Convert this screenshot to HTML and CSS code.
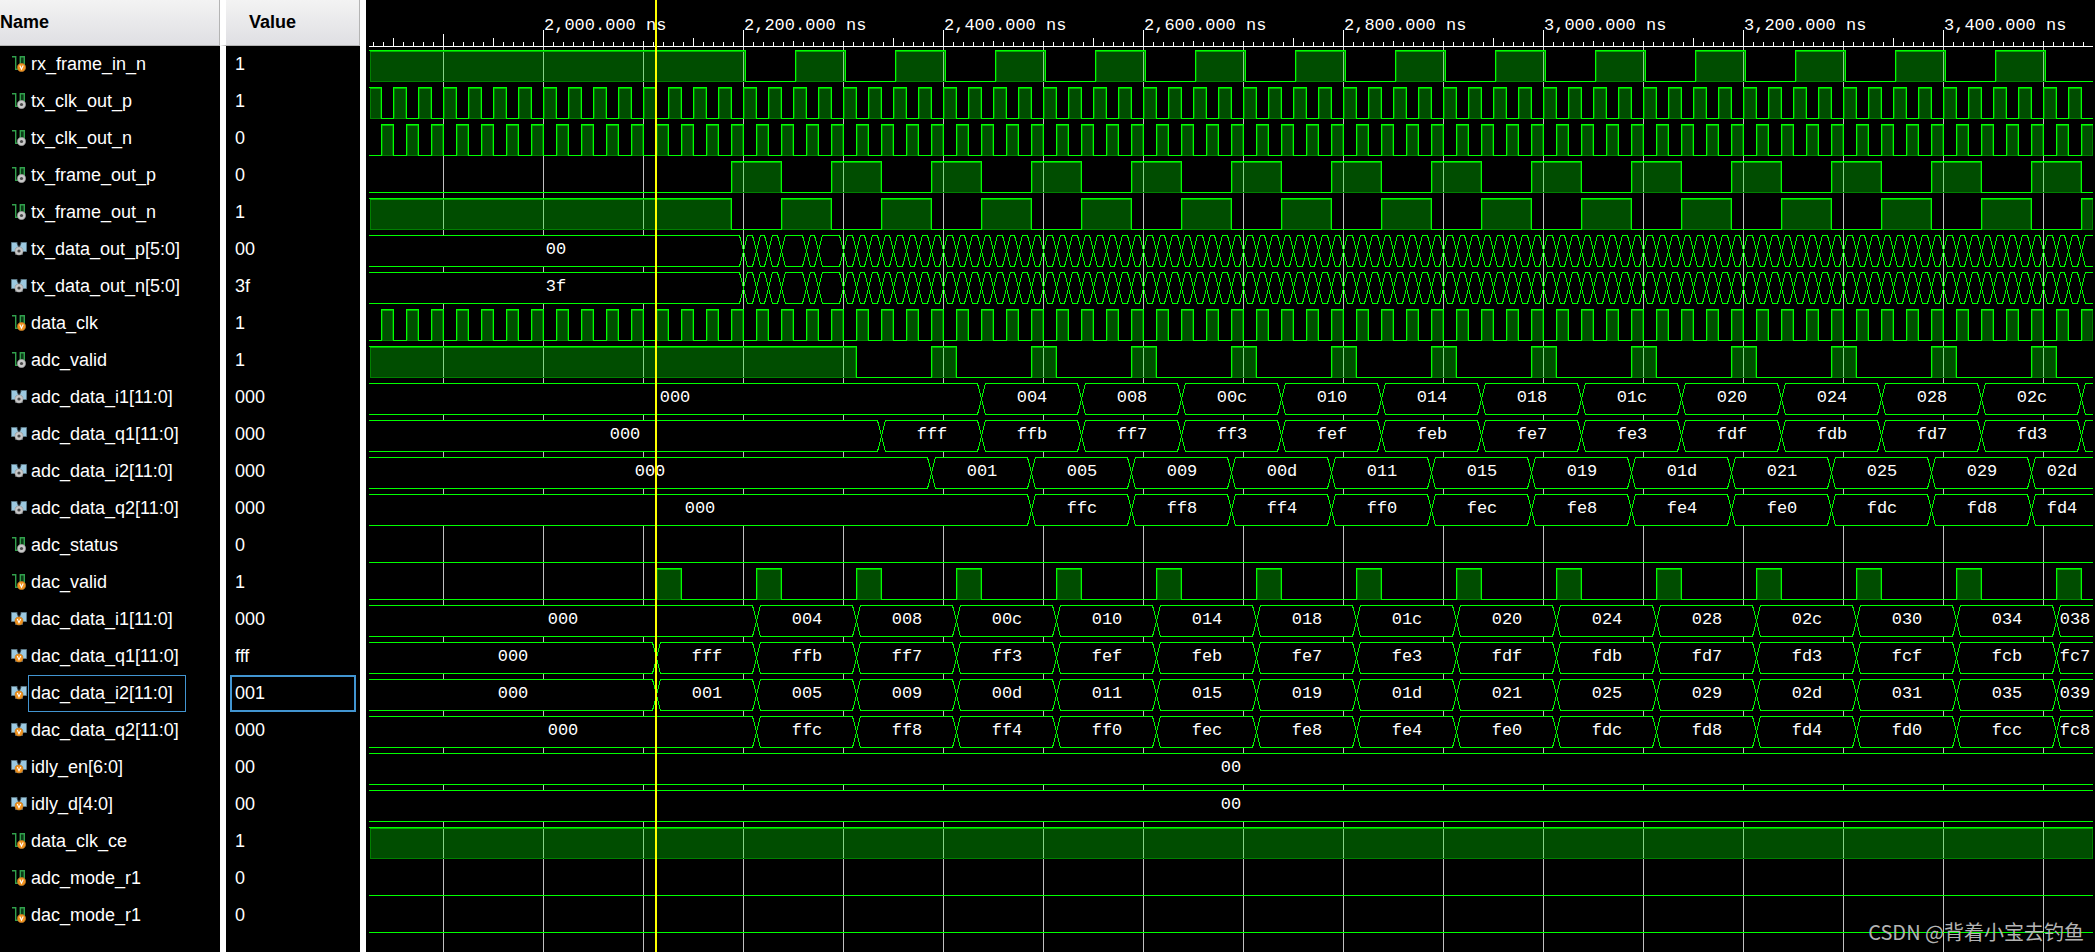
FILE: index.html
```html
<!DOCTYPE html>
<html lang="en">
<head>
  <meta charset="UTF-8">
  <meta name="viewport" content="width=device-width, initial-scale=1.0">
  <title>Waveform</title>
  <link rel="stylesheet" href="styles.css">
</head>
<body>
  <svg class="defs" width="0" height="0" aria-hidden="true">
    <symbol id="badge-in" viewBox="0 0 9 9">
      <circle cx="4.5" cy="4.5" r="4.2" fill="#f0921e" stroke="#a8702c" stroke-width="0.6"/>
      <path d="M2.8 2.6L4.5 6.2L6.2 2.6" fill="none" stroke="#fff" stroke-width="1.1"/>
    </symbol>
    <symbol id="badge-out" viewBox="0 0 9 9">
      <circle cx="4.5" cy="4.5" r="4.2" fill="#c8c8c8" stroke="#8a8a8a" stroke-width="0.6"/>
      <circle cx="4.5" cy="4.5" r="1.6" fill="#4a4a4a"/>
    </symbol>
    <symbol id="wire" viewBox="0 0 17 17">
      <path d="M10 1H13V14H10z" fill="#0c3d18"/>
      <path d="M1 0.8H4.7V13.3H9.3V0.8H13.3V10" fill="none" stroke="#31a04c" stroke-width="1.4"/>
    </symbol>
    <symbol id="bus" viewBox="0 0 17 17">
      <path d="M4 9H12V14H4z" fill="#4c5459"/>
      <path d="M0.5 1.5H6L8 4.5L10 1.5H15.5V10.5H0.5z" fill="#9cc9e0" stroke="#5c7886" stroke-width="1"/>
      <path d="M6 2L8 7L10 2" fill="#000" stroke="#3b4b54" stroke-width="1"/>
    </symbol>
  </svg>

  <main class="viewer">
    <div class="panel">
      <table class="signals">
        <thead>
          <tr><th class="col-name">Name</th><th class="col-value">Value</th></tr>
        </thead>
        <tbody id="signalRows"></tbody>
      </table>
    </div>
    <svg class="wave" id="wave" role="img" aria-label="Waveform"></svg>
  </main>
  <div class="watermark">CSDN @背着小宝去钓鱼</div>

  <script src="wave.js"></script>
</body>
</html>
```

FILE: styles.css
```css
body {
  margin: 0;
  background: #fff;
  font-family: "Liberation Sans", Arial, sans-serif;
  font-size: 18px;
  overflow: hidden;
}

.defs {
  display: block;
}

.viewer {
  display: flex;
  min-height: 100vh;
  padding-right: 5px;
  box-sizing: border-box;
}

.panel {
  flex: 0 0 360px;
  margin-right: 6px;
  background: linear-gradient(to right, #000 220px, #fff 220px, #fff 226px, #000 226px);
}

.signals {
  width: 100%;
  table-layout: fixed;
  border-collapse: separate;
  border-spacing: 0;
  color: #fff;
}

.signals th,
.signals td {
  padding: 0;
  box-sizing: border-box;
  text-align: left;
}

.signals th {
  height: 46px;
  background: linear-gradient(#f3f3f3, #dfdfe3);
  border: 0 solid #b4b4b4;
  border-width: 0 1px 1px 0;
  color: #000;
}

.signals .col-name {
  width: 220px;
}

.signals .col-value {
  background-clip: padding-box;
  border-left: 6px solid #fff;
  padding-left: 23px;
}

.name,
.value {
  display: flex;
  align-items: center;
  height: 37px;
}

.name {
  padding-left: 11px;
}

.icon {
  width: 17px;
  height: 17px;
}

.name span,
.value {
  border: 1px solid transparent;
  box-sizing: border-box;
}

.name span {
  height: 37px;
  line-height: 35px;
  padding: 0 12px 0 2px;
}

.value {
  border-width: 2px;
  margin: 0 4px 0 10px;
  padding: 0 3px;
}

.selected .name span,
.selected .value {
  border-color: #4295d1;
}

.wave {
  flex: 1;
  min-width: 0;
  background: #000;
  shape-rendering: crispEdges;
}

.wave text {
  font-family: "Liberation Mono", "Courier New", monospace;
  font-size: 17px;
  fill: #fff;
}

.bus-label {
  text-anchor: middle;
}

.grid {
  stroke: #c0c0c0;
}

.axis {
  fill: none;
  stroke: #fff;
}

.label-back {
  fill: #000;
}

.high {
  fill: #00ff00;
  fill-opacity: 0.3;
}

.shade {
  fill: none;
  stroke: #008000;
}

.shade-top {
  stroke: #00b400;
}

.line {
  fill: none;
  stroke: #00ff00;
}

.bus {
  fill: none;
  stroke: #00ff00;
}

.cursor {
  fill: #ffff00;
}

.watermark {
  position: absolute;
  right: 16px;
  bottom: 6px;
  color: #b4b4b4;
  font-family: "Noto Sans CJK SC", sans-serif;
  font-size: 20px;
  line-height: 28px;
}
```

FILE: wave.js
```js
// 1px = 1ns, panel x of the 2000ns mark
const ORIGIN = 177;
const START = 3;
const END = 1727;
const HEAD = 46;
const ROW = 37;

const hex = n => (n & 0xfff).toString(16).padStart(3, '0');

function range(from, step, to) {
  const out = [];
  for (let x = from; x <= to; x += step) out.push(x);
  return out;
}

// high pulses [from, to] repeated with a period
function pulses(first, width, period, lead) {
  const list = lead ? [[START, lead]] : [];
  for (let x = first; x < END; x += period) {
    list.push([x, x + width]);
  }
  return list;
}

function busData(first, value, step) {
  const edges = range(first, 100, END - 1);
  return { edges, labels: ['000', ...edges.map((_, i) => hex(value + i * step))] };
}

function fastBus(idle) {
  const edges = [377, 390, 402, 415, 440, 452];
  for (let x = 477; x <= 1715; x += 25) {
    edges.push(x);
    if (x + 13 <= 1715) edges.push(x + 13);
  }
  return { edges, labels: [idle] };
}

const signals = [
  { name: 'rx_frame_in_n', value: '1', dir: 'in', high: pulses(429, 50, 100, 379) },
  { name: 'tx_clk_out_p', value: '1', dir: 'out', high: pulses(27, 13, 25, 15) },
  { name: 'tx_clk_out_n', value: '0', dir: 'out', high: pulses(15, 12, 25) },
  { name: 'tx_frame_out_p', value: '0', dir: 'out', high: pulses(365, 50, 100) },
  { name: 'tx_frame_out_n', value: '1', dir: 'out', high: pulses(415, 50, 100, 365) },
  { name: 'tx_data_out_p[5:0]', value: '00', dir: 'out', bus: fastBus('00') },
  { name: 'tx_data_out_n[5:0]', value: '3f', dir: 'out', bus: fastBus('3f') },
  { name: 'data_clk', value: '1', dir: 'in', high: pulses(15, 12, 25) },
  { name: 'adc_valid', value: '1', dir: 'out', high: pulses(565, 25, 100, 490) },
  { name: 'adc_data_i1[11:0]', value: '000', dir: 'out', bus: busData(615, 4, 4) },
  { name: 'adc_data_q1[11:0]', value: '000', dir: 'out', bus: busData(515, -1, -4) },
  { name: 'adc_data_i2[11:0]', value: '000', dir: 'out', bus: busData(565, 1, 4) },
  { name: 'adc_data_q2[11:0]', value: '000', dir: 'out', bus: busData(665, -4, -4) },
  { name: 'adc_status', value: '0', dir: 'out', high: [] },
  { name: 'dac_valid', value: '1', dir: 'in', high: pulses(290, 25, 100) },
  { name: 'dac_data_i1[11:0]', value: '000', dir: 'in', bus: busData(390, 4, 4) },
  { name: 'dac_data_q1[11:0]', value: 'fff', dir: 'in', bus: busData(290, -1, -4) },
  { name: 'dac_data_i2[11:0]', value: '001', dir: 'in', bus: busData(290, 1, 4), selected: true },
  { name: 'dac_data_q2[11:0]', value: '000', dir: 'in', bus: busData(390, -4, -4) },
  { name: 'idly_en[6:0]', value: '00', dir: 'in', bus: { edges: [], labels: ['00'] } },
  { name: 'idly_d[4:0]', value: '00', dir: 'in', bus: { edges: [], labels: ['00'] } },
  { name: 'data_clk_ce', value: '1', dir: 'in', high: [[START, END]] },
  { name: 'adc_mode_r1', value: '0', dir: 'in', high: [] },
  { name: 'dac_mode_r1', value: '0', dir: 'in', high: [] }
];

function icon(s) {
  const bx = s.bus ? 3.5 : 6;
  const by = s.bus ? 5.5 : 7;
  return `<svg class="icon" viewBox="0 0 17 17" aria-hidden="true">
    <use href="#${s.bus ? 'bus' : 'wire'}" width="17" height="17"/>
    <use href="#badge-${s.dir}" x="${bx}" y="${by}" width="9" height="9"/>
  </svg>`;
}

function drawRuler() {
  let ticks = '', labels = '', grid = '';
  for (let x = 7; x < END; x += 10) {
    const t = x - ORIGIN;
    const top = t % 200 === 0 ? 30 : t % 100 === 0 ? 34 : t % 50 === 0 ? 38 : 42;
    ticks += `M${x + 0.5} ${top}V46`;
    if (t % 100 === 0) grid += `M${x + 0.5} 47V2000`;
    if (t % 200 === 0 && t >= 0) {
      const ns = (2000 + t).toLocaleString('en-US') + '.000 ns';
      labels += `<rect class="label-back" x="${x + 1}" y="14" width="122" height="27"/>
        <text x="${x + 1}" y="30">${ns}</text>`;
    }
  }
  return `<path class="grid" d="${grid}"/><path class="axis" d="${ticks}M${START} 46.5H${END}"/>${labels}`;
}

function drawLevel(s, y) {
  const top = y + 4.5, bottom = y + 35.5;
  let d = `M${START} `, out = '';
  d += s.high.length && s.high[0][0] === START ? top : bottom;
  s.high.forEach(([a, b]) => {
    const right = Math.min(b, END);
    out += `<rect class="high" x="${a + 1}" y="${y + 5}" width="${right - a - 1}" height="30"/>
      <path class="shade" d="M${a + 1.5} ${bottom}V${top + 1}M${right - 0.5} ${top + 1}V${bottom}"/>
      <path class="shade shade-top" d="M${a + 1} ${top + 1}H${right}"/>`;
    if (a !== START) d += `H${a + 0.5}V${top}`;
    d += b < END ? `H${b + 0.5}V${bottom}` : `H${END}`;
  });
  d += `H${END}`;
  out += `<path class="line" d="${d}"/>`;
  s.high.forEach(([a, b]) => {
    out += `<path class="shade" d="M${a + 1} ${bottom}H${Math.min(b, END)}"/>`;
  });
  return out;
}

function drawBus(s, y) {
  const top = y + 4.5, mid = y + 20, bottom = y + 35.5;
  const edges = s.bus.edges;
  let out = '';
  for (let i = 0; i <= edges.length; i++) {
    const first = i === 0, last = i === edges.length;
    const a = first ? START : edges[i - 1] + 0.5;
    const b = last ? END : edges[i] + 0.5;
    const head = first ? `M${a} ${top}` : `M${a} ${mid}L${a + 4} ${top}`;
    const right = last ? `H${b}M${b} ${bottom}` : `H${b - 4}L${b} ${mid}L${b - 4} ${bottom}`;
    const tail = first ? `H${a}` : `H${a + 4}L${a} ${mid}`;
    const back = `M${first ? a : a + 4} ${top}H${last ? b : b - 4}V${bottom}H${first ? a : a + 4}z`;
    out += `<path class="label-back" d="${back}"/><path class="bus" d="${head}${right}${tail}"/>`;
    const label = s.bus.labels[i];
    if (label && b - a > 30) {
      out += `<text class="bus-label" x="${Math.round((a + b) / 2)}" y="${y + 23}">${label}</text>`;
    }
  }
  return out;
}

document.getElementById('signalRows').innerHTML = signals.map(s => `
  <tr${s.selected ? ' class="selected"' : ''}>
    <td><div class="name">${icon(s)}<span>${s.name}</span></div></td>
    <td><div class="value">${s.value}</div></td>
  </tr>`).join('');

document.getElementById('wave').innerHTML = drawRuler() +
  signals.map((s, i) => s.bus ? drawBus(s, HEAD + i * ROW) : drawLevel(s, HEAD + i * ROW)).join('') +
  '<rect class="cursor" x="289" y="0" width="2" height="100%"/>';
```
